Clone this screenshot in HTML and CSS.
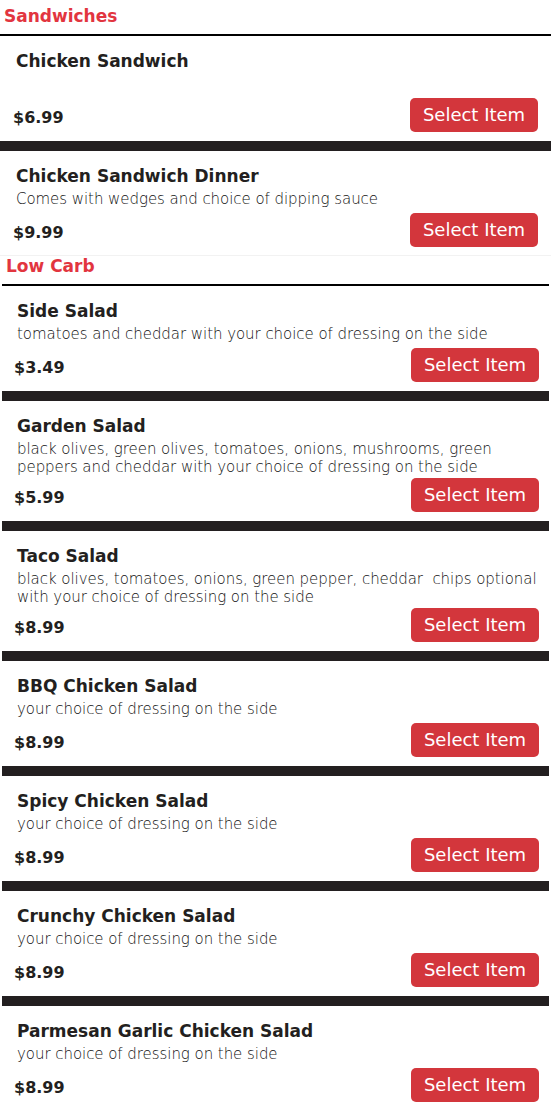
FILE: index.html
```html
<!DOCTYPE html>
<html lang="en">
<head>
    <meta charset="UTF-8">
    <meta name="viewport" content="width=device-width, initial-scale=1.0">
    <title>Menu</title>
    <link rel="stylesheet" href="styles.css">
</head>
<body>
    <section class="category category-first">
        <h2 class="category-title">Sandwiches</h2>

        <div class="menu-item">
            <h3 class="item-name">Chicken Sandwich</h3>
            <div class="item-row">
                <span class="item-price">$6.99</span>
                <a href="#" class="select-button">Select Item</a>
            </div>
        </div>

        <div class="menu-item">
            <h3 class="item-name">Chicken Sandwich Dinner</h3>
            <p class="item-desc">Comes with wedges and choice of dipping sauce</p>
            <div class="item-row">
                <span class="item-price">$9.99</span>
                <a href="#" class="select-button">Select Item</a>
            </div>
        </div>
    </section>

    <section class="category category-inset">
        <h2 class="category-title">Low Carb</h2>

        <div class="menu-item">
            <h3 class="item-name">Side Salad</h3>
            <p class="item-desc">tomatoes and cheddar with your choice of dressing on the side</p>
            <div class="item-row">
                <span class="item-price">$3.49</span>
                <a href="#" class="select-button">Select Item</a>
            </div>
        </div>

        <div class="menu-item">
            <h3 class="item-name">Garden Salad</h3>
            <p class="item-desc">black olives, green olives, tomatoes, onions, mushrooms, green peppers and cheddar with your choice of dressing on the side</p>
            <div class="item-row">
                <span class="item-price">$5.99</span>
                <a href="#" class="select-button">Select Item</a>
            </div>
        </div>

        <div class="menu-item">
            <h3 class="item-name">Taco Salad</h3>
            <p class="item-desc">black olives, tomatoes, onions, green pepper, cheddar&nbsp; chips optional with your choice of dressing on the side</p>
            <div class="item-row">
                <span class="item-price">$8.99</span>
                <a href="#" class="select-button">Select Item</a>
            </div>
        </div>

        <div class="menu-item">
            <h3 class="item-name">BBQ Chicken Salad</h3>
            <p class="item-desc">your choice of dressing on the side</p>
            <div class="item-row">
                <span class="item-price">$8.99</span>
                <a href="#" class="select-button">Select Item</a>
            </div>
        </div>

        <div class="menu-item">
            <h3 class="item-name">Spicy Chicken Salad</h3>
            <p class="item-desc">your choice of dressing on the side</p>
            <div class="item-row">
                <span class="item-price">$8.99</span>
                <a href="#" class="select-button">Select Item</a>
            </div>
        </div>

        <div class="menu-item">
            <h3 class="item-name">Crunchy Chicken Salad</h3>
            <p class="item-desc">your choice of dressing on the side</p>
            <div class="item-row">
                <span class="item-price">$8.99</span>
                <a href="#" class="select-button">Select Item</a>
            </div>
        </div>

        <div class="menu-item">
            <h3 class="item-name">Parmesan Garlic Chicken Salad</h3>
            <p class="item-desc">your choice of dressing on the side</p>
            <div class="item-row">
                <span class="item-price">$8.99</span>
                <a href="#" class="select-button">Select Item</a>
            </div>
        </div>
    </section>
</body>
</html>
```
FILE: styles.css
```css
body {
    margin: 0;
    font-family: 'DejaVu Sans', sans-serif;
    color: #231f20;
    background: #fff;
}

.category-title {
    margin: 0;
    padding: 7px 4px 9px;
    font-size: 17px;
    font-weight: 700;
    line-height: 18px;
    color: #e2353f;
    border-bottom: 2px solid #000;
}

.category-inset {
    margin: 0 2px;
}

.category-inset .category-title {
    padding-top: 1px;
}

.menu-item {
    display: flex;
    flex-direction: column;
    box-sizing: border-box;
    min-height: 115px;
    padding: 14px 13px 9px 16px;
    border-bottom: 10px solid #231f20;
}

.category-inset .menu-item {
    padding-left: 15px;
    padding-right: 10px;
}

.menu-item:last-child {
    min-height: 105px;
    padding-bottom: 8px;
    border-bottom: 1px solid #f2f2f2;
}

.item-name {
    margin: 0;
    font-size: 17px;
    font-weight: 700;
    line-height: 22px;
}

.item-desc {
    margin: 3px 0 0;
    font-size: 15px;
    font-weight: 300;
    line-height: 18px;
    letter-spacing: -0.05px;
    color: #111;
}

.item-row {
    display: flex;
    justify-content: space-between;
    align-items: center;
    margin-top: auto;
    padding-top: 2px;
}

.item-price {
    margin-left: -3px;
    padding-top: 5px;
    font-size: 16px;
    font-weight: 700;
}

.select-button {
    display: block;
    width: 128px;
    height: 34px;
    box-sizing: border-box;
    font-size: 18px;
    line-height: 34px;
    text-align: center;
    color: #fff;
    text-decoration: none;
    background-color: #d3363c;
    border-radius: 5px;
}
```
